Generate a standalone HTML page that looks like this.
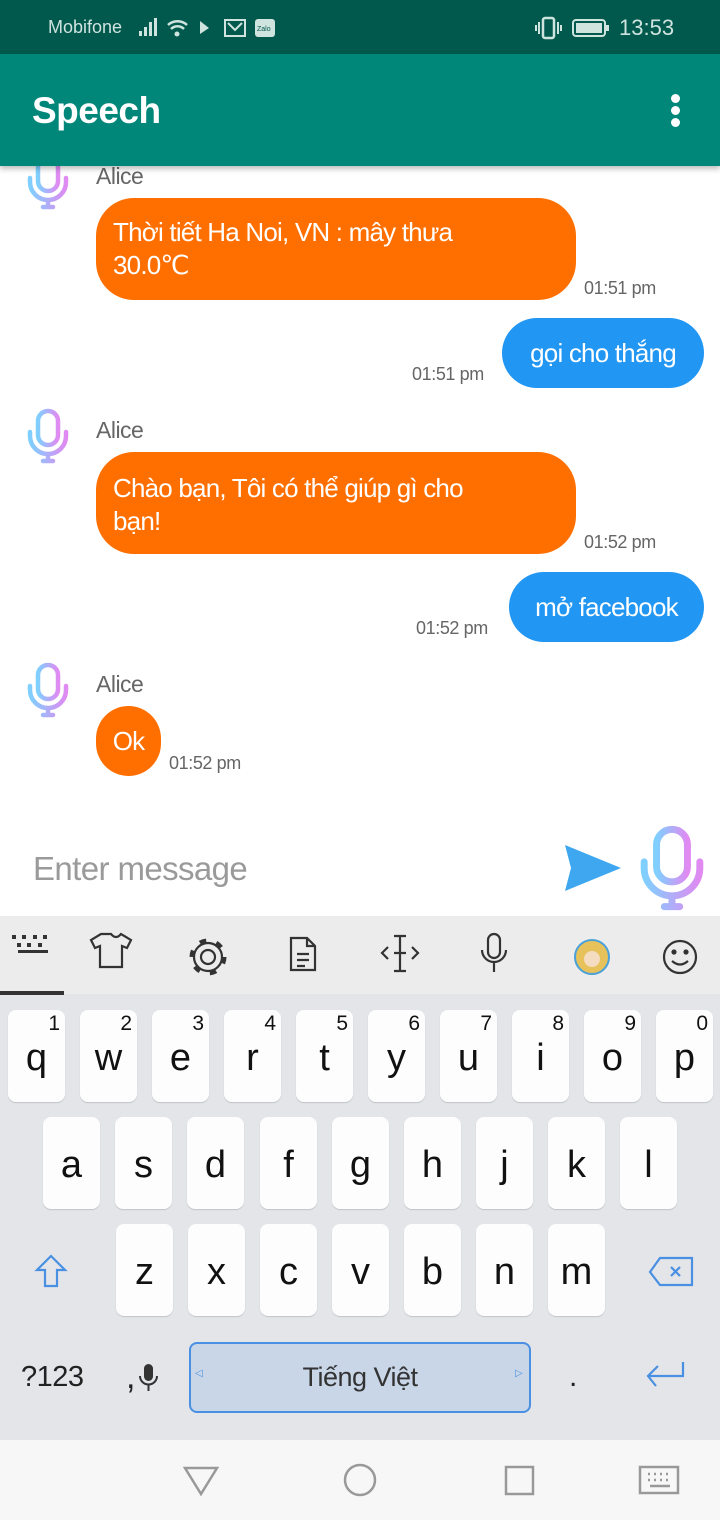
<!DOCTYPE html>
<html><head><meta charset="utf-8"><style>
*{margin:0;padding:0;box-sizing:border-box}
body{width:720px;height:1520px;position:relative;overflow:hidden;background:#fff;font-family:"Liberation Sans",sans-serif}
.a{position:absolute}
.sb{left:0;top:0;width:720px;height:54px;background:#00594c;color:#cfe3df;font-size:18px}
.ab{left:0;top:54px;width:720px;height:112px;background:#00877a;box-shadow:0 3px 5px rgba(0,0,0,.25);z-index:2}
.name{font-size:23px;color:#666;left:96px;letter-spacing:-0.5px}
.ob{background:#ff6f00;color:#fff;font-size:26px;border-radius:38px;padding:0 17px;line-height:33px;letter-spacing:-0.8px}
.bb{background:#2196f3;color:#fff;font-size:26px;border-radius:36px;text-align:center;letter-spacing:-0.8px}
.tm{font-size:18px;color:#666;letter-spacing:-0.4px}
.kb{left:0;top:916px;width:720px;height:524px;background:#e3e5e9}
.tb{left:0;top:916px;width:720px;height:78px;background:#ececec}
.k{position:absolute;width:57px;height:92px;background:#fdfdfd;border-radius:8px;box-shadow:0 1px 1px rgba(0,0,0,.15);font-size:38px;text-align:center;line-height:96px;color:#111}
.k sup{position:absolute;right:5px;top:2px;font-size:21px;line-height:24px}
.nav{left:0;top:1440px;width:720px;height:80px;background:#f7f7f7}
</style></head><body>
<svg width="0" height="0" style="position:absolute"><defs>
<linearGradient id="g" x1="0" y1="0" x2="1" y2="0"><stop offset="0" stop-color="#7fd0ff"/><stop offset="1" stop-color="#e08af2"/></linearGradient>
<symbol id="mic" viewBox="0 0 44 56"><g fill="none" stroke="url(#g)" stroke-width="4.5" stroke-linecap="round"><rect x="12" y="3" width="20" height="34" rx="10"/><path d="M4 24v4a18 18 0 0 0 36 0v-4M22 46v7M17 53h10"/></g></symbol>
</defs></svg>

<div class="a sb"><span class="a" style="left:48px;top:17px">Mobifone</span>
<svg class="a" style="left:137px;top:16px" width="140" height="24"><g fill="#cfe3df"><rect x="2" y="15" width="3" height="5"/><rect x="7" y="11" width="3" height="9"/><rect x="12" y="6" width="3" height="14"/><rect x="17" y="2" width="3" height="18"/></g><g fill="none" stroke="#cfe3df" stroke-width="2.5"><path d="M31 9a14 14 0 0 1 19 0M34 13a9 9 0 0 1 13 0"/></g><circle cx="40" cy="18" r="2.5" fill="#cfe3df"/><path d="M63 5l9 7-9 6z" fill="#cfe3df"/><rect x="88" y="4" width="20" height="16" fill="none" stroke="#cfe3df" stroke-width="2"/><path d="M91 7l7 7 7-7" fill="none" stroke="#cfe3df" stroke-width="2"/><rect x="118" y="3" width="20" height="18" rx="3" fill="#cfe3df"/><text x="120" y="15" font-size="7" fill="#00594c" font-family="Liberation Sans">Zalo</text></svg>
<svg class="a" style="left:535px;top:16px" width="80" height="24"><rect x="8" y="2" width="11" height="20" rx="2" fill="none" stroke="#cfe3df" stroke-width="2.5"/><path d="M4 6v12M23 6v12M1 9v6M26 9v6" stroke="#cfe3df" stroke-width="2"/><rect x="38" y="4" width="32" height="16" rx="3" fill="none" stroke="#cfe3df" stroke-width="2"/><rect x="41" y="7" width="26" height="10" fill="#cfe3df"/><rect x="71" y="9" width="3" height="6" fill="#cfe3df"/></svg>
<span class="a" style="left:619px;top:15px;font-size:22px">13:53</span></div>

<div class="a ab"><span class="a" style="left:32px;top:36px;color:#fff;font-size:37px;font-weight:bold;letter-spacing:-0.5px">Speech</span>
<div class="a" style="left:671px;top:40px;width:10px"><div style="width:9px;height:9px;border-radius:50%;background:#fff;margin-bottom:3px"></div><div style="width:9px;height:9px;border-radius:50%;background:#fff;margin-bottom:3px"></div><div style="width:9px;height:9px;border-radius:50%;background:#fff"></div></div></div>

<svg class="a" style="left:26px;top:154px" width="44" height="56"><use href="#mic"/></svg>
<span class="a name" style="top:163px">Alice</span>
<div class="a ob" style="left:96px;top:198px;width:480px;height:102px;padding-top:18px">Thời tiết Ha Noi, VN : mây thưa<br>30.0℃</div>
<span class="a tm" style="left:584px;top:278px">01:51 pm</span>
<div class="a bb" style="left:502px;top:318px;width:202px;height:70px;line-height:70px">gọi cho thắng</div>
<span class="a tm" style="left:412px;top:364px">01:51 pm</span>

<svg class="a" style="left:26px;top:408px" width="44" height="56"><use href="#mic"/></svg>
<span class="a name" style="top:417px">Alice</span>
<div class="a ob" style="left:96px;top:452px;width:480px;height:102px;padding-top:20px">Chào bạn, Tôi có thể giúp gì cho<br>bạn!</div>
<span class="a tm" style="left:584px;top:532px">01:52 pm</span>
<div class="a bb" style="left:509px;top:572px;width:195px;height:70px;line-height:70px">mở facebook</div>
<span class="a tm" style="left:416px;top:618px">01:52 pm</span>

<svg class="a" style="left:26px;top:662px" width="44" height="56"><use href="#mic"/></svg>
<span class="a name" style="top:671px">Alice</span>
<div class="a ob" style="left:96px;top:706px;width:65px;height:70px;padding:0;text-align:center;line-height:70px;border-radius:35px">Ok</div>
<span class="a tm" style="left:169px;top:753px">01:52 pm</span>

<span class="a" style="left:33px;top:850px;font-size:33px;color:#9a9a9a;letter-spacing:-0.6px">Enter message</span>
<svg class="a" style="left:563px;top:843px" width="60" height="50"><path d="M2 2L58 25 2 48 8 25z" fill="#3ea7f0"/></svg>
<svg class="a" style="left:638px;top:824px" width="68" height="88" viewBox="0 0 44 56"><use href="#mic"/></svg>

<div class="a kb"></div>
<div class="a tb"></div>
<div class="a" style="left:0;top:991px;width:64px;height:4px;background:#333"></div>
<svg class="a" style="left:0;top:926px" width="720" height="60" fill="none" stroke="#333" stroke-width="2.2">
<g fill="#333" stroke="none"><rect x="12" y="9" width="4" height="4"/><rect x="22" y="9" width="4" height="4"/><rect x="33" y="9" width="4" height="4"/><rect x="43" y="9" width="4" height="4"/><rect x="17" y="17" width="4" height="4"/><rect x="27" y="17" width="4" height="4"/><rect x="38" y="17" width="4" height="4"/><rect x="18" y="24" width="30" height="3"/></g>
<path d="M101 8l-10 6 4 8 5-2v21h22V20l5 2 4-8-10-6q-5 6-10 0z"/>
<circle cx="208" cy="31" r="7"/><circle cx="208" cy="31" r="14"/><circle cx="208" cy="31" r="16" stroke-width="5" stroke-dasharray="6.5 10.25"/>
<path d="M291 12h16l8 8v24h-24z M307 12v8h8 M297 28h12M297 34h12M297 40h8"/>
<path d="M400 10v35M394 10h12M394 45h12M394 27h12M388 21l-6 6 6 6M412 21l6 6-6 6"/>
<rect x="488" y="8" width="12" height="24" rx="6"/><path d="M482 24a12 12 0 0 0 24 0M494 36v10"/>
<circle cx="680" cy="31" r="16"/><circle cx="674" cy="26" r="1.5" fill="#333"/><circle cx="686" cy="26" r="1.5" fill="#333"/><path d="M672 35q8 7 16 0"/>
<circle cx="592" cy="31" r="17" fill="#e7c25a" stroke="#4aa0d8" stroke-width="2"/><circle cx="592" cy="33" r="8" fill="#f4dcc0" stroke="none"/>
</svg>

<div class="k" style="left:8px;top:1010px">q<sup>1</sup></div>
<div class="k" style="left:80px;top:1010px">w<sup>2</sup></div>
<div class="k" style="left:152px;top:1010px">e<sup>3</sup></div>
<div class="k" style="left:224px;top:1010px">r<sup>4</sup></div>
<div class="k" style="left:296px;top:1010px">t<sup>5</sup></div>
<div class="k" style="left:368px;top:1010px">y<sup>6</sup></div>
<div class="k" style="left:440px;top:1010px">u<sup>7</sup></div>
<div class="k" style="left:512px;top:1010px">i<sup>8</sup></div>
<div class="k" style="left:584px;top:1010px">o<sup>9</sup></div>
<div class="k" style="left:656px;top:1010px">p<sup>0</sup></div>

<div class="k" style="left:43px;top:1117px">a</div>
<div class="k" style="left:115px;top:1117px">s</div>
<div class="k" style="left:187px;top:1117px">d</div>
<div class="k" style="left:260px;top:1117px">f</div>
<div class="k" style="left:332px;top:1117px">g</div>
<div class="k" style="left:404px;top:1117px">h</div>
<div class="k" style="left:476px;top:1117px">j</div>
<div class="k" style="left:548px;top:1117px">k</div>
<div class="k" style="left:620px;top:1117px">l</div>

<svg class="a" style="left:34px;top:1254px" width="34" height="36" fill="none" stroke="#4a90e2" stroke-width="2.2"><path d="M17 2L3 16h8v16h12V16h8z"/></svg>
<div class="k" style="left:116px;top:1224px">z</div>
<div class="k" style="left:188px;top:1224px">x</div>
<div class="k" style="left:260px;top:1224px">c</div>
<div class="k" style="left:332px;top:1224px">v</div>
<div class="k" style="left:404px;top:1224px">b</div>
<div class="k" style="left:476px;top:1224px">n</div>
<div class="k" style="left:548px;top:1224px">m</div>
<svg class="a" style="left:648px;top:1256px" width="46" height="32" fill="none" stroke="#4a90e2" stroke-width="2.2"><path d="M12 2h32v27H12L2 16z"/><path d="M23 11l9 9M32 11l-9 9"/></svg>

<span class="a" style="left:21px;top:1361px;font-size:29px;color:#222;letter-spacing:-0.5px">?123</span>
<span class="a" style="left:126px;top:1358px;font-size:34px;color:#222">,</span>
<svg class="a" style="left:138px;top:1362px" width="22" height="32" fill="#333"><rect x="6" y="2" width="9" height="17" rx="4.5"/><path d="M2 14a8.5 8.5 0 0 0 17 0" fill="none" stroke="#333" stroke-width="2"/><rect x="9.5" y="22" width="2" height="7"/></svg>
<div class="a" style="left:189px;top:1342px;width:342px;height:71px;background:#c8d6e7;border:2px solid #4a90e2;border-radius:8px;text-align:center;line-height:66px;font-size:27px;color:#333;letter-spacing:-0.5px">Tiếng Việt</div>
<span class="a" style="left:195px;top:1368px;font-size:10px;color:#4a90e2">◁</span>
<span class="a" style="left:515px;top:1368px;font-size:10px;color:#4a90e2">▷</span>
<span class="a" style="left:569px;top:1360px;font-size:30px;color:#222">.</span>
<svg class="a" style="left:644px;top:1360px" width="42" height="36" fill="none" stroke="#4a90e2" stroke-width="2.2"><path d="M39 2v14H4M14 6L4 16l8 10"/></svg>

<div class="a nav"></div>
<svg class="a" style="left:0;top:1440px" width="720" height="80" fill="none" stroke="#999" stroke-width="2.5"><path d="M185 28h32l-16 26z"/><circle cx="360" cy="40" r="15"/><rect x="506" y="27" width="27" height="27"/><rect x="640" y="27" width="38" height="26"/><path d="M648 34h2M654 34h2M660 34h2M666 34h2M648 40h2M654 40h2M660 40h2M666 40h2M650 46h20"/></svg>
</body></html>
